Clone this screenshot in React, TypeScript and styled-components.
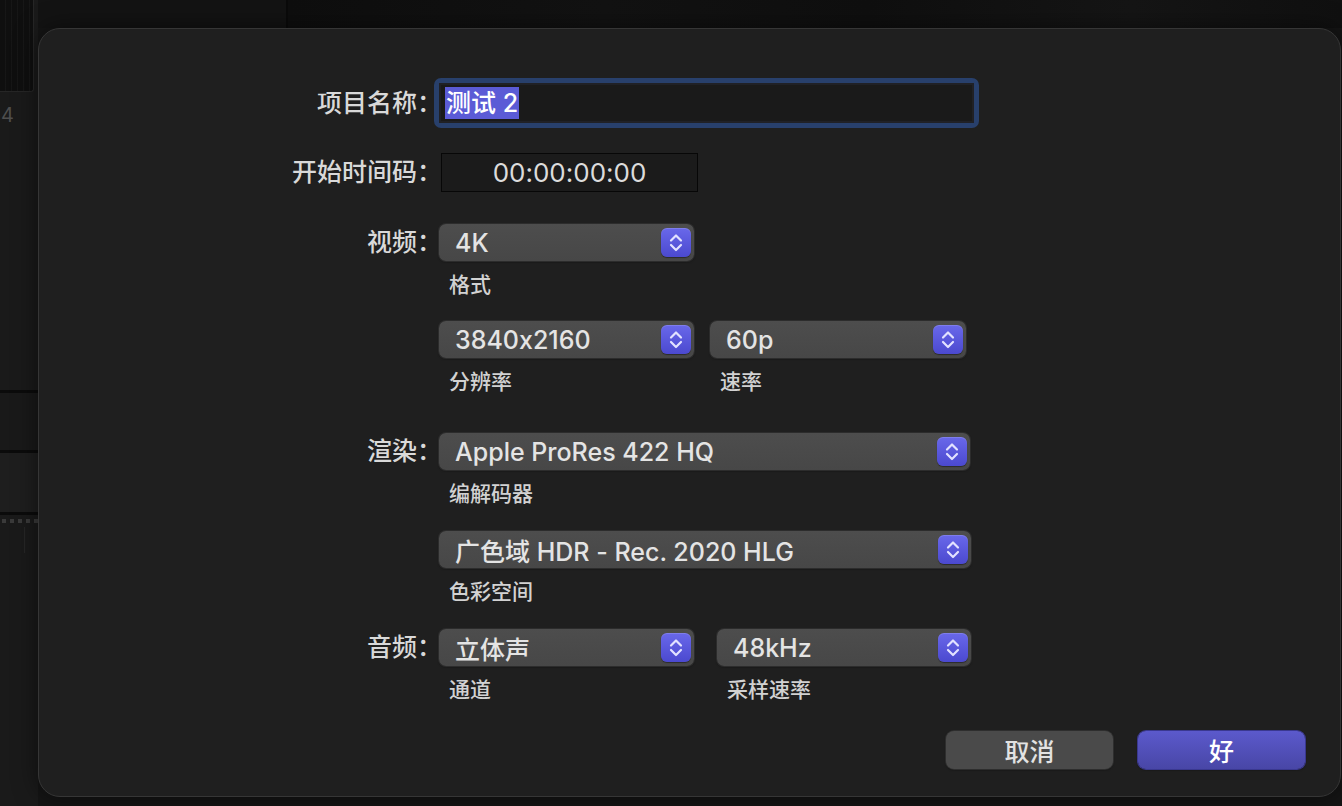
import styled, { createGlobalStyle } from 'styled-components'

const GlobalStyle = createGlobalStyle`
    html, body {
        margin: 0;
        padding: 0;
        background: #141414;
    }
    * {
        box-sizing: border-box;
    }
`

const FONT = `"Inter", "Noto Sans CJK SC", sans-serif`

const Stepper = () => (
    <StepBtn>
        <svg width="30" height="29" viewBox="0 0 30 29">
            <path d="M10 12.5 L15 7.5 L20 12.5" fill="none" stroke="#e2e2ff" strokeWidth="2.2" strokeLinecap="round" strokeLinejoin="round" />
            <path d="M10 17 L15 22 L20 17" fill="none" stroke="#e2e2ff" strokeWidth="2.2" strokeLinecap="round" strokeLinejoin="round" />
        </svg>
    </StepBtn>
)

const Select = ({ value, caption, width }: { value: string, caption: string, width: number }) => (
    <Field>
        <Popup $w={width}>
            <PopupText>{value}</PopupText>
            <Stepper />
        </Popup>
        <Caption>{caption}</Caption>
    </Field>
)

export default function App() {
    return (
        <>
            <GlobalStyle />
            <Page>
                <SideRail>
                    <Thumb />
                    <RailNumber>4</RailNumber>
                    <RailGap />
                    <RailLine />
                    <RailPanel $bg="#191919" $h={57} />
                    <RailLine />
                    <RailPanel $bg="#1e1e1e" $h={59} />
                    <RailLine />
                    <Dots>
                        {Array.from({ length: 5 }).map((_, i) => <Dot key={i} />)}
                    </Dots>
                    <RailTick />
                </SideRail>
                <TopBar>
                    <TopLeft />
                    <TopImage />
                </TopBar>
                <Dialog>
                    <Row>
                        <Label $h={50}>项目名称：</Label>
                        <Ring>
                            <NameBox>
                                <Selected>测试 2</Selected>
                            </NameBox>
                        </Ring>
                    </Row>
                    <Row $mt={25}>
                        <Label $h={39}>开始时间码：</Label>
                        <Timecode>00:00:00:00</Timecode>
                    </Row>
                    <Row $mt={32}>
                        <Label $h={37}>视频：</Label>
                        <Fields>
                            <Select value="4K" caption="格式" width={255} />
                        </Fields>
                    </Row>
                    <Row $mt={24}>
                        <div />
                        <Fields $gap={16}>
                            <Select value="3840x2160" caption="分辨率" width={255} />
                            <Select value="60p" caption="速率" width={256} />
                        </Fields>
                    </Row>
                    <Row $mt={39}>
                        <Label $h={37}>渲染：</Label>
                        <Fields>
                            <Select value="Apple ProRes 422 HQ" caption="编解码器" width={531} />
                        </Fields>
                    </Row>
                    <Row $mt={25}>
                        <div />
                        <Fields>
                            <Select value="广色域 HDR - Rec. 2020 HLG" caption="色彩空间" width={532} />
                        </Fields>
                    </Row>
                    <Row $mt={25}>
                        <Label $h={37}>音频：</Label>
                        <Fields $gap={23}>
                            <Select value="立体声" caption="通道" width={255} />
                            <Select value="48kHz" caption="采样速率" width={254} />
                        </Fields>
                    </Row>
                    <Buttons>
                        <Button>取消</Button>
                        <Button $primary>好</Button>
                    </Buttons>
                </Dialog>
            </Page>
        </>
    )
}

const Page = styled.div`
    width: 1342px;
    height: 806px;
    display: grid;
    grid-template-columns: 38px 1fr;
    grid-template-rows: 28px 1fr 9px;
    background: #151515;
    overflow: hidden;
    font-family: ${FONT};
    font-feature-settings: "calt" 0;
`

const SideRail = styled.div`
    grid-column: 1;
    grid-row: 1 / 4;
    display: flex;
    flex-direction: column;
    background: #1a1a1a;
    overflow: hidden;
`

const Thumb = styled.div`
    width: 34px;
    height: 92px;
    flex-shrink: 0;
    background:
        repeating-linear-gradient(90deg, transparent 0 5px, rgba(255,255,255,0.03) 5px 6px),
        #0f0f0f;
    border-right: 1px solid #262626;
    border-bottom: 1px solid #262626;
    border-bottom-right-radius: 3px;
`

const RailNumber = styled.div`
    margin-top: 10px;
    height: 26px;
    font-size: 20px;
    line-height: 26px;
    color: #4e4e4e;
    padding-left: 1px;
`

const RailGap = styled.div`
    height: 262px;
    flex-shrink: 0;
`

const RailLine = styled.div`
    height: 3px;
    flex-shrink: 0;
    background: #0b0b0b;
`

const RailPanel = styled.div<{ $bg: string, $h: number }>`
    height: ${p => p.$h}px;
    flex-shrink: 0;
    background: ${p => p.$bg};
`

const Dots = styled.div`
    display: flex;
    gap: 4px;
    padding: 4px 0 0 2px;
`

const Dot = styled.div`
    width: 4px;
    height: 4px;
    background: #3a3a3a;
`

const RailTick = styled.div`
    width: 1px;
    height: 26px;
    margin: 4px 0 0 24px;
    background: #262626;
`

const TopBar = styled.div`
    grid-column: 2;
    grid-row: 1;
    display: flex;
`

const TopLeft = styled.div`
    width: 250px;
    background: #131313;
    border-right: 2px solid #0a0a0a;
`

const TopImage = styled.div`
    flex: 1;
    background:
        linear-gradient(90deg, #0e0e0e 0%, #121212 30%, #0f0f0f 55%, #151515 80%, #101010 100%);
`

const Dialog = styled.div`
    grid-column: 2;
    grid-row: 2;
    width: 1303px;
    display: flex;
    flex-direction: column;
    padding-top: 49px;
    background: #1f1f1f;
    border: 1px solid #363636;
    border-radius: 22px;
    box-shadow: 0 0 24px rgba(0, 0, 0, 0.5);
`

const Row = styled.div<{ $mt?: number }>`
    display: grid;
    grid-template-columns: 389px 1fr;
    column-gap: 11px;
    margin-top: ${p => p.$mt || 0}px;
`

const Label = styled.div<{ $h: number }>`
    text-align: right;
    font-size: 25px;
    font-weight: 500;
    line-height: ${p => p.$h}px;
    color: #d9d9d9;
    white-space: nowrap;
    margin-right: -14px;
`

const Ring = styled.div`
    width: 545px;
    height: 50px;
    margin-left: -5px;
    border: 5px solid #28406c;
    border-radius: 7px;
    background: #1b1b1d;
`

const NameBox = styled.div`
    height: 100%;
    display: flex;
    align-items: center;
    padding-left: 4px;
    border: 2px solid #202126;
    background: #1a1a1a;
`

const Selected = styled.span`
    display: inline-block;
    height: 32px;
    line-height: 32px;
    padding: 0 1px;
    background: #5b5bd6;
    color: #ffffff;
    font-size: 25px;
    font-weight: 500;
`

const Timecode = styled.div`
    width: 257px;
    height: 39px;
    margin-left: 2px;
    display: flex;
    align-items: center;
    justify-content: center;
    background: #1b1b1b;
    border: 1px solid #070707;
    font-size: 26px;
    color: #dcdcdc;
    padding-bottom: 1px;
`

const Fields = styled.div<{ $gap?: number }>`
    display: flex;
    gap: ${p => p.$gap || 0}px;
`

const Field = styled.div`
    display: flex;
    flex-direction: column;
`

const Popup = styled.div<{ $w: number }>`
    width: ${p => p.$w}px;
    height: 37px;
    display: flex;
    align-items: center;
    justify-content: space-between;
    padding-left: 16px;
    padding-right: 3px;
    border-radius: 7px;
    background: linear-gradient(#4d4d4d, #474747);
    box-shadow: 0 0 0 1px #2c2c2c, 0 1px 2px rgba(0, 0, 0, 0.5);
`

const PopupText = styled.span`
    font-size: 25px;
    font-weight: 500;
    color: #e4e4e4;
    white-space: nowrap;
`

const StepBtn = styled.div`
    width: 30px;
    height: 29px;
    border-radius: 6px;
    background: linear-gradient(#6968ea, #4b49cf);
    box-shadow: inset 0 1px 0 rgba(255, 255, 255, 0.15), 0 1px 1px rgba(0, 0, 0, 0.4);
    display: flex;
`

const Caption = styled.div`
    margin-top: 12px;
    padding-left: 10px;
    font-size: 21px;
    font-weight: 500;
    line-height: 24px;
    color: #d2d2d2;
`

const Buttons = styled.div`
    display: flex;
    justify-content: flex-end;
    gap: 25px;
    margin-top: 29px;
    padding-right: 35px;
`

const Button = styled.div<{ $primary?: boolean }>`
    width: 167px;
    height: 38px;
    border-radius: 8px;
    display: flex;
    align-items: center;
    justify-content: center;
    font-size: 25px;
    font-weight: 500;
    color: ${p => p.$primary ? '#ffffff' : '#e2e2e2'};
    background: ${p => p.$primary ? 'linear-gradient(#5b59cc, #4846a6)' : '#4a4a4a'};
    box-shadow: 0 0 0 1px ${p => p.$primary ? '#3a3890' : '#2e2e2e'}, 0 1px 2px rgba(0, 0, 0, 0.5);
`
